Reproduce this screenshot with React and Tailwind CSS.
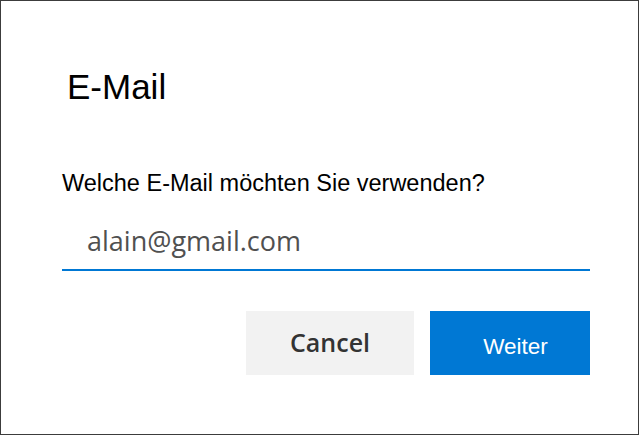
export default function App() {
  return (
    <div className="w-[639px] h-[435px] box-border border border-[#3c3c3c] bg-white pt-[66px] pl-[61px] pr-[48px]">
      {/* Title */}
      <h1 className="ml-[5px] text-[35px] leading-[40px] text-black font-normal font-['Liberation_Sans',Arial,sans-serif]">
        E-Mail
      </h1>

      {/* Prompt */}
      <p className="mt-[62px] text-[23.5px] leading-[28px] text-black font-['Liberation_Sans',Arial,sans-serif]">
        Welche E-Mail möchten Sie verwenden?
      </p>

      {/* Email field */}
      <div className="mt-[25px] border-b-2 border-[#0078d4] pl-[25px] pb-[10px]">
        <span className="block text-[27px] leading-[37px] text-[#505050] font-['Open_Sans',sans-serif]">
          alain@gmail.com
        </span>
      </div>

      {/* Actions */}
      <div className="mt-[40px] flex justify-end gap-4">
        <button className="w-[168px] h-[64px] bg-[#f2f2f2] text-[#333] text-[25px] font-semibold font-['Open_Sans',sans-serif] flex items-center justify-center">
          Cancel
        </button>
        <button className="w-[160px] h-[64px] bg-[#0078d4] text-white text-[22.5px] font-['Liberation_Sans',Arial,sans-serif] flex items-center justify-center pl-[11px] pt-[8px]">
          Weiter
        </button>
      </div>
    </div>
  );
}
